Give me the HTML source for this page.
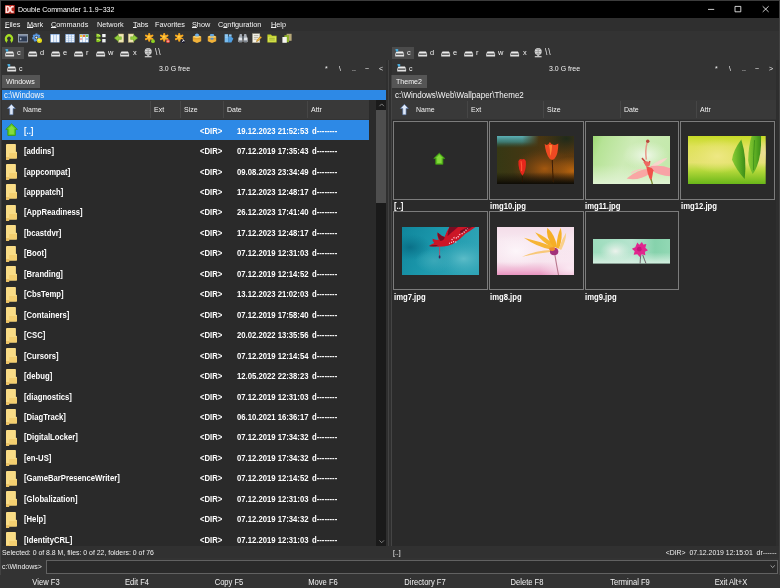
<!DOCTYPE html>
<html><head><meta charset="utf-8"><title>Double Commander</title>
<style>
*{box-sizing:border-box;margin:0;padding:0}
html,body{width:780px;height:588px;overflow:hidden;background:#333333}
body{font-family:"Liberation Sans",sans-serif;font-size:7px;color:#e8e8e8;position:relative}
#app,#app *{position:absolute}
#app u{position:static}
#app{left:0;top:0;width:780px;height:588px;overflow:hidden;background:#333333;will-change:transform}
span{white-space:pre;line-height:1}
svg{overflow:visible}
#title{left:0;top:0;width:780px;height:18px;background:#000}
#title .t{left:18px;top:5.9px;font-size:7.7px;color:#fff;transform:scaleX(.915);transform-origin:0 50%}
#menu{left:0;top:18px;width:780px;height:13px;background:#2f2f2f}
#menu span{top:3.2px;font-size:7.9px;color:#f4f4f4;transform:scaleX(.924);transform-origin:0 50%}
#menu u{text-decoration:underline;text-underline-offset:0px;text-decoration-thickness:0.6px}
#tool{left:0;top:31px;width:780px;height:14px;background:#333333}
#tool svg{top:1.5px;width:10px;height:10.4px}
#drives{left:0;top:45px;width:780px;height:15px;background:#333333}
.drv{top:4.4px;width:9.5px;height:7.5px}
.dl{top:4.4px;font-size:7.8px;color:#f0f0f0;transform:scaleX(.95);transform-origin:0 50%}
.dsel{top:1.6px;height:12.4px;width:22px;background:#4b4b4b}
.pinfo span{font-size:7.6px;color:#f2f2f2;top:64.7px;transform:scaleX(.92);transform-origin:0 50%}
.tab{top:75.4px;height:13px;background:#555;}
.tab span{left:3.7px;top:2.9px;font-size:7.7px;color:#f6f6f6;transform:scaleX(.92);transform-origin:0 50%}
.path{top:89.6px;height:10px}
.path span{left:2.6px;top:1px;font-size:8.5px;color:#f6f6f6;transform:scaleX(.94);transform-origin:0 50%}
.hdr{background:#393939;height:19.4px;top:100px}
.hdr span{top:6px;font-size:7.6px;color:#f2f2f2;transform:scaleX(.92);transform-origin:0 50%}
.hdr i{top:1px;width:1px;height:17.4px;background:#464646}
.sort{top:3.1px;width:8.8px;height:13.1px}
.list{background:#2a2a2a}
.row{left:2px;width:367px;height:20.45px}
.row.sel{background:#2d89e6}
.row span{font-weight:bold;font-size:8.3px;color:#fff;top:7.1px;transform:scaleX(.928);transform-origin:0 50%}
.nm{left:21.7px}.sz{left:198px}.dt{left:235px}.at{left:310px}
.fic{left:4px;width:11px;height:16px}
.upic{left:3.2px;top:3.6px;width:13.2px;height:13.6px}
.cell{width:94.8px;height:79.1px;border:1px solid #7c7c7c;background:#2a2a2a}
.cl{font-weight:bold;font-size:8.3px;color:#fff;transform:scaleX(.928);transform-origin:0 50%;margin-top:-0.3px}
.th{overflow:hidden}
.st span{font-size:7.5px;color:#f0f0f0;top:548.6px;transform:scaleX(.92);transform-origin:0 50%}
#cmd{left:0;top:558px;width:780px;height:17px;background:#333333}
#cmd .lb{left:2px;top:4.7px;font-size:7.6px;color:#f2f2f2;transform:scaleX(.92);transform-origin:0 50%}
#cmd .in{left:46.4px;top:1.8px;width:731.2px;height:14px;border:1px solid #626262;background:#2a2a2a}
#fkeys{left:0;top:575px;width:780px;height:13px;background:#333333}
#fkeys span{top:3.6px;font-size:8.2px;color:#f2f2f2;transform:translateX(-50%) scaleX(.927);transform-origin:50% 50%}
</style></head><body><div id="app">
<div id="title"><span class="t">Double Commander 1.1.9~332</span>
<svg style="left:5.3px;top:4.6px;width:9.8px;height:8.7px" viewBox="0 0 10 9"><rect width="10" height="9" fill="#b8261c"/><path d="M1.3 1.5 H2.8 Q4.5 1.5 4.5 4.5 Q4.5 7.5 2.8 7.5 H1.3Z M8.9 2 Q5.8 0.9 5.8 4.5 Q5.8 8.1 8.9 7" fill="none" stroke="#ffe4e0" stroke-width="1.7"/></svg>
<svg style="left:700px;top:4px;width:80px;height:10px" viewBox="0 0 80 10"><path d="M8 5.4 H14.2 M35 2.4 H40.8 V7.8 H35Z M62.7 2.3 L68.6 7.9 M68.6 2.3 L62.7 7.9" fill="none" stroke="#fff" stroke-width="0.8"/></svg>
</div>
<div id="menu">
<span style="left:5px"><u>F</u>iles</span><span style="left:27px"><u>M</u>ark</span><span style="left:51px"><u>C</u>ommands</span><span style="left:97px">Network</span><span style="left:133px"><u>T</u>abs</span><span style="left:155px">Favorites</span><span style="left:192px"><u>S</u>how</span><span style="left:218px">C<u>o</u>nfiguration</span><span style="left:271px"><u>H</u>elp</span>
</div>
<div id="tool"><svg style="left:3.9px" viewBox="0 0 10 10"><path transform="translate(0.6 0) scale(0.88 1)" d="M2.3 7.6 A3.4 3.4 0 1 1 7.7 7.6" fill="none" stroke="#a6de24" stroke-width="2.4"/><path transform="translate(0.6 0) scale(0.88 1)" d="M0.2 6.4 L3.9 6.6 L2 9.8Z M9.8 6.4 L6.1 6.6 L8 9.8Z" fill="#a6de24"/></svg><svg style="left:18px" viewBox="0 0 10 10"><rect x="0.4" y="1.4" width="9.2" height="7.4" fill="#2f3d55" stroke="#aab4c4" stroke-width="0.8"/><rect x="0.8" y="1.8" width="8.4" height="1.4" fill="#7f8da6"/><path d="M2 4.8 L3.4 5.8 L2 6.8" stroke="#e8eef8" stroke-width="0.7" fill="none"/></svg><svg style="left:32px" viewBox="0 0 10 10"><circle cx="4.4" cy="4.4" r="3" fill="none" stroke="#5b9be6" stroke-width="2.4" stroke-dasharray="1.6 1"/><circle cx="4.4" cy="4.4" r="2.6" fill="none" stroke="#5b9be6" stroke-width="1.4"/><circle cx="4.4" cy="4.4" r="1.1" fill="#e8f0fb"/><circle cx="7.5" cy="7.4" r="2.5" fill="#e6da18"/><circle cx="7" cy="6.8" r="0.9" fill="#f6f07a"/></svg><svg style="left:49.5px" viewBox="0 0 10 10"><rect x="0.3" y="0.8" width="9.4" height="8.6" fill="#7aa2d6"/><rect x="0.9" y="1.5" width="2.5" height="7.4" fill="#f4f8fd"/><rect x="3.8" y="1.5" width="2.5" height="7.4" fill="#e3eefb"/><rect x="6.7" y="1.5" width="2.5" height="7.4" fill="#f4f8fd"/></svg><svg style="left:64.5px" viewBox="0 0 10 10"><rect x="0.3" y="0.8" width="9.4" height="8.6" fill="#7aa2d6"/><rect x="0.9" y="1.5" width="2.5" height="7.4" fill="#f0f5fc"/><rect x="3.8" y="1.5" width="2.5" height="7.4" fill="#e4eefa"/><rect x="6.7" y="1.5" width="2.5" height="7.4" fill="#f0f5fc"/><path d="M0.6 3.4 H9.4 M0.6 5.4 H9.4 M0.6 7.3 H9.4" stroke="#9dbbe0" stroke-width="0.4"/></svg><svg style="left:78.5px" viewBox="0 0 10 10"><rect x="0.3" y="0.8" width="9.4" height="8.6" fill="#7aa2d6"/><rect x="0.9" y="1.5" width="2.5" height="7.4" fill="#f4f8fd"/><rect x="3.8" y="1.5" width="2.5" height="7.4" fill="#f4f8fd"/><rect x="6.7" y="1.5" width="2.5" height="7.4" fill="#f4f8fd"/><rect x="1" y="1.6" width="2.3" height="2.2" fill="#f2c43a"/><rect x="3.9" y="1.6" width="2.3" height="2.2" fill="#e8753a"/><rect x="6.8" y="1.6" width="2.3" height="2.2" fill="#7fc241"/><rect x="1" y="5" width="2.3" height="1.6" fill="#e8a0a0"/><rect x="6.8" y="5" width="2.3" height="1.6" fill="#a0c4e8"/></svg><svg style="left:96px" viewBox="0 0 10 10"><path d="M0.3 0.6 Q4.4 0 5 3 Q2.4 5.2 0.3 3.8Z M0.3 5.2 Q4.2 4.6 5.2 7.4 Q2.6 10 0.3 8.6Z" fill="#86c61e"/><path d="M0.9 1.8 Q2.8 1.2 3.8 2.6 M0.9 6.4 Q2.8 5.8 3.8 7.2" stroke="#dcf08e" stroke-width="0.9" fill="none"/><rect x="6.2" y="0.8" width="3.4" height="3.2" fill="#f4f6f8"/><rect x="6.2" y="5.8" width="3.4" height="3.4" fill="#eceff2"/></svg><svg style="left:113.5px" viewBox="0 0 10 10"><rect x="4.2" y="0.8" width="5.4" height="8.2" fill="#efe6b4" stroke="#c9bd7a" stroke-width="0.5"/><path d="M0.3 4.9 L4.4 1.6 V3.6 H7.4 V6.2 H4.4 V8.2Z" fill="#94ce3c" stroke="#5c9c1c" stroke-width="0.4"/></svg><svg style="left:128px" viewBox="0 0 10 10"><rect x="0.4" y="0.8" width="5.4" height="8.2" fill="#efe6b4" stroke="#c9bd7a" stroke-width="0.5"/><path d="M9.7 4.9 L5.6 1.6 V3.6 H2.6 V6.2 H5.6 V8.2Z" fill="#94ce3c" stroke="#5c9c1c" stroke-width="0.4"/></svg><svg style="left:145px" viewBox="0 0 10 10"><path d="M4.2 0.8 V7.6 M1 2.4 L7.4 6 M7.4 2.4 L1 6" stroke="#f6a620" stroke-width="2.1" stroke-linecap="round" fill="none"/><circle cx="4.2" cy="4.2" r="2.3" fill="#f8b42c"/><circle cx="3.8" cy="3.6" r="1" fill="#fdd34e"/><circle cx="8" cy="8" r="1.9" fill="#8ed022"/></svg><svg style="left:160px" viewBox="0 0 10 10"><path d="M4.2 0.8 V7.6 M1 2.4 L7.4 6 M7.4 2.4 L1 6" stroke="#f6a620" stroke-width="2.1" stroke-linecap="round" fill="none"/><circle cx="4.2" cy="4.2" r="2.3" fill="#f8b42c"/><circle cx="3.8" cy="3.6" r="1" fill="#fdd34e"/><circle cx="8" cy="8" r="1.9" fill="#e8483a"/><path d="M6.9 8 H9.1" stroke="#fff" stroke-width="0.7"/></svg><svg style="left:174.8px" viewBox="0 0 10 10"><path d="M4.2 0.8 V7.6 M1 2.4 L7.4 6 M7.4 2.4 L1 6" stroke="#f6a620" stroke-width="2.1" stroke-linecap="round" fill="none"/><circle cx="4.2" cy="4.2" r="2.3" fill="#f8b42c"/><circle cx="3.8" cy="3.6" r="1" fill="#fdd34e"/><rect x="6" y="6" width="3.8" height="3.8" fill="#1b1b2e"/><path d="M6.8 9 L9 6.8 M9 6.8 H7.4 M9 6.8 V8.4" stroke="#fff" stroke-width="0.7" fill="none"/></svg><svg style="left:192px" viewBox="0 0 10 10"><path d="M0.8 3.4 H9.2 V8 L5 9.8 L0.8 8Z" fill="#f1b23a"/><path d="M0.8 3.4 L5 1.6 L9.2 3.4 L5 5.2Z" fill="#f9d06a"/><path d="M3.2 0.8 H6.8 V3.2 H3.2Z" fill="#5fa3e0"/><path d="M0.8 5.6 H9.2" stroke="#c9871a" stroke-width="0.6"/><circle cx="5" cy="1.6" r="1.3" fill="#6fb0ea"/></svg><svg style="left:207px" viewBox="0 0 10 10"><path d="M0.8 3.4 H9.2 V8 L5 9.8 L0.8 8Z" fill="#f1b23a"/><path d="M0.8 3.4 L5 1.6 L9.2 3.4 L5 5.2Z" fill="#f9d06a"/><path d="M3.2 0.8 H6.8 V3.2 H3.2Z" fill="#5fa3e0"/><path d="M0.8 5.6 H9.2" stroke="#c9871a" stroke-width="0.6"/><path d="M3.6 4.6 H6.4 V6.4 H3.6Z" fill="#4d8fd6"/></svg><svg style="left:224px" viewBox="0 0 10 10"><path d="M0.6 1 H4.2 V9.2 H0.6Z" fill="#79bcee"/><path d="M4.2 3.4 H7 L9.4 5.2 L7.4 9.2 H4.2Z" fill="#4f9fe2"/><path d="M5 1.2 H7.6 V3.4 H5Z" fill="#8cc6f2"/><path d="M1.2 2 H3.6 M1.2 4 H3.6" stroke="#bfe0f8" stroke-width="0.6"/></svg><svg style="left:238px" viewBox="0 0 10 10"><path d="M1 4 L1.8 0.8 H3.8 L4.2 4Z M9 4 L8.2 0.8 H6.2 L5.8 4Z" fill="#a4aab2"/><rect x="0.4" y="4" width="4" height="5" rx="0.8" fill="#dde1e6"/><rect x="5.6" y="4" width="4" height="5" rx="0.8" fill="#dde1e6"/><rect x="4" y="3" width="2" height="2.4" fill="#5c646e"/><rect x="0.8" y="7.2" width="3.2" height="1.6" fill="#7c848e"/><rect x="6" y="7.2" width="3.2" height="1.6" fill="#7c848e"/></svg><svg style="left:252px" viewBox="0 0 10 10"><rect x="0.6" y="0.6" width="7.2" height="8.8" fill="#f6f4ea" stroke="#b8b49c" stroke-width="0.5"/><path d="M1.8 2.4 H6.4 M1.8 4.2 H6.4 M1.8 6 H4.6" stroke="#8c8a78" stroke-width="0.6"/><path d="M4.4 8.6 L5 6.6 L8.6 3 L9.8 4.2 L6.2 7.8Z" fill="#f2b632" stroke="#8a5c10" stroke-width="0.4"/></svg><svg style="left:267px" viewBox="0 0 10 10"><path d="M0.4 1.4 H4 L5 2.6 H9.6 V9.2 H0.4Z" fill="#c2d22c"/><rect x="1.2" y="3.6" width="7.6" height="4.8" fill="#dde85a"/><path d="M2.2 5 H7.8 M2.2 6.8 H7.8" stroke="#7f9410" stroke-width="0.7"/></svg><svg style="left:282px" viewBox="0 0 10 10"><rect x="4.6" y="0.6" width="5" height="7" fill="#b7a878"/><rect x="2.4" y="2" width="4.6" height="7" fill="#8db02a"/><rect x="0.4" y="3.8" width="4.4" height="5.8" fill="#f6f6f2"/></svg></div>
<div id="drives"><div class="dsel" style="left:2px"></div><svg class="drv" style="left:4.5px" viewBox="0 0 9.5 7.5"><path d="M1.5 2.5 H7.9 L9.1 4.5 H0.2Z" fill="#ececec"/><rect x="0.2" y="4.4" width="8.9" height="3" rx="0.5" fill="#e2e2e2"/><rect x="0.9" y="4.7" width="7.5" height="1.1" fill="#4c4c4c"/><path d="M0.5 0 L3.2 0.3 V2.5 H1Z" fill="#35a4dc"/><path d="M0.4 0.9 H3.3" stroke="#9fdcf6" stroke-width="0.35"/></svg><span class="dl" style="left:17px">c</span><svg class="drv" style="left:27.8px" viewBox="0 0 9.5 7.5"><path d="M1.5 2.5 H7.9 L9.1 4.5 H0.2Z" fill="#ececec"/><rect x="0.2" y="4.4" width="8.9" height="3" rx="0.5" fill="#e2e2e2"/><rect x="0.9" y="4.7" width="7.5" height="1.1" fill="#4c4c4c"/></svg><span class="dl" style="left:40px">d</span><svg class="drv" style="left:50.8px" viewBox="0 0 9.5 7.5"><path d="M1.5 2.5 H7.9 L9.1 4.5 H0.2Z" fill="#ececec"/><rect x="0.2" y="4.4" width="8.9" height="3" rx="0.5" fill="#e2e2e2"/><rect x="0.9" y="4.7" width="7.5" height="1.1" fill="#4c4c4c"/></svg><span class="dl" style="left:63px">e</span><svg class="drv" style="left:73.6px" viewBox="0 0 9.5 7.5"><path d="M1.5 2.5 H7.9 L9.1 4.5 H0.2Z" fill="#ececec"/><rect x="0.2" y="4.4" width="8.9" height="3" rx="0.5" fill="#e2e2e2"/><rect x="0.9" y="4.7" width="7.5" height="1.1" fill="#4c4c4c"/></svg><span class="dl" style="left:86px">r</span><svg class="drv" style="left:95.8px" viewBox="0 0 9.5 7.5"><path d="M1.5 2.5 H7.9 L9.1 4.5 H0.2Z" fill="#ececec"/><rect x="0.2" y="4.4" width="8.9" height="3" rx="0.5" fill="#e2e2e2"/><rect x="0.9" y="4.7" width="7.5" height="1.1" fill="#4c4c4c"/></svg><span class="dl" style="left:108px">w</span><svg class="drv" style="left:120.4px" viewBox="0 0 9.5 7.5"><path d="M1.5 2.5 H7.9 L9.1 4.5 H0.2Z" fill="#ececec"/><rect x="0.2" y="4.4" width="8.9" height="3" rx="0.5" fill="#e2e2e2"/><rect x="0.9" y="4.7" width="7.5" height="1.1" fill="#4c4c4c"/></svg><span class="dl" style="left:132.5px">x</span><svg style="left:144px;top:3.2px;width:8.5px;height:9.5px" viewBox="0 0 8.5 9.5"><circle cx="4.2" cy="3.6" r="3.5" fill="#d9d9d9"/><path d="M0.8 3.6 H7.6 M4.2 0.2 V7 M1.8 1.2 Q4.2 2.6 6.6 1.2 M1.8 6 Q4.2 4.6 6.6 6" stroke="#7a7a7a" stroke-width="0.5" fill="none"/><rect x="3.2" y="7" width="2" height="1.2" fill="#bdbdbd"/><rect x="0.8" y="8.1" width="6.8" height="1.2" fill="#cfcfcf"/></svg><span class="dl" style="left:154.6px;top:3.4px;font-size:8.8px;letter-spacing:1px">\\</span><div class="dsel" style="left:392px"></div><svg class="drv" style="left:394.5px" viewBox="0 0 9.5 7.5"><path d="M1.5 2.5 H7.9 L9.1 4.5 H0.2Z" fill="#ececec"/><rect x="0.2" y="4.4" width="8.9" height="3" rx="0.5" fill="#e2e2e2"/><rect x="0.9" y="4.7" width="7.5" height="1.1" fill="#4c4c4c"/><path d="M0.5 0 L3.2 0.3 V2.5 H1Z" fill="#35a4dc"/><path d="M0.4 0.9 H3.3" stroke="#9fdcf6" stroke-width="0.35"/></svg><span class="dl" style="left:407px">c</span><svg class="drv" style="left:417.8px" viewBox="0 0 9.5 7.5"><path d="M1.5 2.5 H7.9 L9.1 4.5 H0.2Z" fill="#ececec"/><rect x="0.2" y="4.4" width="8.9" height="3" rx="0.5" fill="#e2e2e2"/><rect x="0.9" y="4.7" width="7.5" height="1.1" fill="#4c4c4c"/></svg><span class="dl" style="left:430px">d</span><svg class="drv" style="left:440.8px" viewBox="0 0 9.5 7.5"><path d="M1.5 2.5 H7.9 L9.1 4.5 H0.2Z" fill="#ececec"/><rect x="0.2" y="4.4" width="8.9" height="3" rx="0.5" fill="#e2e2e2"/><rect x="0.9" y="4.7" width="7.5" height="1.1" fill="#4c4c4c"/></svg><span class="dl" style="left:453px">e</span><svg class="drv" style="left:463.6px" viewBox="0 0 9.5 7.5"><path d="M1.5 2.5 H7.9 L9.1 4.5 H0.2Z" fill="#ececec"/><rect x="0.2" y="4.4" width="8.9" height="3" rx="0.5" fill="#e2e2e2"/><rect x="0.9" y="4.7" width="7.5" height="1.1" fill="#4c4c4c"/></svg><span class="dl" style="left:476px">r</span><svg class="drv" style="left:485.8px" viewBox="0 0 9.5 7.5"><path d="M1.5 2.5 H7.9 L9.1 4.5 H0.2Z" fill="#ececec"/><rect x="0.2" y="4.4" width="8.9" height="3" rx="0.5" fill="#e2e2e2"/><rect x="0.9" y="4.7" width="7.5" height="1.1" fill="#4c4c4c"/></svg><span class="dl" style="left:498px">w</span><svg class="drv" style="left:510.4px" viewBox="0 0 9.5 7.5"><path d="M1.5 2.5 H7.9 L9.1 4.5 H0.2Z" fill="#ececec"/><rect x="0.2" y="4.4" width="8.9" height="3" rx="0.5" fill="#e2e2e2"/><rect x="0.9" y="4.7" width="7.5" height="1.1" fill="#4c4c4c"/></svg><span class="dl" style="left:522.5px">x</span><svg style="left:534px;top:3.2px;width:8.5px;height:9.5px" viewBox="0 0 8.5 9.5"><circle cx="4.2" cy="3.6" r="3.5" fill="#d9d9d9"/><path d="M0.8 3.6 H7.6 M4.2 0.2 V7 M1.8 1.2 Q4.2 2.6 6.6 1.2 M1.8 6 Q4.2 4.6 6.6 6" stroke="#7a7a7a" stroke-width="0.5" fill="none"/><rect x="3.2" y="7" width="2" height="1.2" fill="#bdbdbd"/><rect x="0.8" y="8.1" width="6.8" height="1.2" fill="#cfcfcf"/></svg><span class="dl" style="left:544.6px;top:3.4px;font-size:8.8px;letter-spacing:1px">\\</span></div>

<!-- LEFT PANEL -->
<div class="pinfo" style="left:0;top:0;width:388px;height:75px">
<svg class="drv" style="left:6.6px;top:63.9px" viewBox="0 0 9.5 7.5"><path d="M1.5 2.5 H7.9 L9.1 4.5 H0.2Z" fill="#ececec"/><rect x="0.2" y="4.4" width="8.9" height="3" rx="0.5" fill="#e2e2e2"/><rect x="0.9" y="4.7" width="7.5" height="1.1" fill="#4c4c4c"/><path d="M0.5 0 L3.2 0.3 V2.5 H1Z" fill="#35a4dc"/><path d="M0.4 0.9 H3.3" stroke="#9fdcf6" stroke-width="0.35"/></svg><span style="left:19px">c</span><span style="left:159px">3.0 G free</span>
<span style="left:325px">*</span><span style="left:339px">\</span><span style="left:352px">..</span><span style="left:365px">~</span><span style="left:379.4px">&lt;</span>
</div>
<div class="tab" style="left:2px;width:38px"><span>Windows</span></div>
<div class="path" style="left:2px;width:384.5px;background:#2d89e6"><span style="left:1.6px;transform:scaleX(.925)">c:\Windows</span></div>
<div class="hdr" style="left:2px;width:367px">
<svg class="sort" style="left:5px" viewBox="0 0 11 14"><path d="M5.5 0.5 L10.5 5.6 H7.6 V13.5 H3.4 V5.6 H0.5Z" fill="#dfe9f8" stroke="#4a6da8" stroke-width="0.7"/></svg>
<span style="left:21px">Name</span><i style="left:148px"></i><span style="left:152px">Ext</span><i style="left:178px"></i><span style="left:182px">Size</span><i style="left:221px"></i><span style="left:225px">Date</span><i style="left:305px"></i><span style="left:309px">Attr</span>
</div>
<div class="list" style="left:2px;top:119.6px;width:374px;height:426.8px"></div>
<div id="lrows" style="left:0;top:0;width:388px;height:546.4px;overflow:hidden">
<div class="row sel" style="top:119.60px">
<svg class="upic" viewBox="0 0 14 14"><path d="M7 0.6 L13.2 6.6 H11 V13 H3 V6.6 H0.8Z" fill="#62cc22" stroke="#3f9a14" stroke-width="0.9"/><path d="M7 2.6 L10.4 6 H9.4 V11.6 H4.6 V6 H3.6Z" fill="#86dc3e"/></svg>
<span class="nm">[..]</span><span class="sz">&lt;DIR&gt;</span><span class="dt">19.12.2023 21:52:53</span><span class="at">d--------</span></div>
<div class="row" style="top:140.05px">
<svg class="fic" viewBox="0 0 11 16" style="top:3.5px"><path d="M0.9 0 H9.2 Q9.9 0 9.9 0.7 V7.8 H10.3 Q11 7.8 11 8.5 V13.8 Q11 14.5 10.3 14.5 H3.2 V15.3 Q3.2 16 2.5 16 H0.7 Q0 16 0 15.3 V0.9 Q0 0 0.9 0Z" fill="#f9dc86"/><path d="M3.2 9 H11 V13.8 Q11 14.5 10.3 14.5 H3.2Z" fill="#f4cf70"/><path d="M0 13 H3.2 V15.3 Q3.2 16 2.5 16 H0.7 Q0 16 0 15.3Z" fill="#ecc264"/></svg>
<span class="nm">[addins]</span><span class="sz">&lt;DIR&gt;</span><span class="dt">07.12.2019 17:35:43</span><span class="at">d--------</span></div>
<div class="row" style="top:160.50px">
<svg class="fic" viewBox="0 0 11 16" style="top:3.5px"><path d="M0.9 0 H9.2 Q9.9 0 9.9 0.7 V7.8 H10.3 Q11 7.8 11 8.5 V13.8 Q11 14.5 10.3 14.5 H3.2 V15.3 Q3.2 16 2.5 16 H0.7 Q0 16 0 15.3 V0.9 Q0 0 0.9 0Z" fill="#f9dc86"/><path d="M3.2 9 H11 V13.8 Q11 14.5 10.3 14.5 H3.2Z" fill="#f4cf70"/><path d="M0 13 H3.2 V15.3 Q3.2 16 2.5 16 H0.7 Q0 16 0 15.3Z" fill="#ecc264"/></svg>
<span class="nm">[appcompat]</span><span class="sz">&lt;DIR&gt;</span><span class="dt">09.08.2023 23:34:49</span><span class="at">d--------</span></div>
<div class="row" style="top:180.95px">
<svg class="fic" viewBox="0 0 11 16" style="top:3.5px"><path d="M0.9 0 H9.2 Q9.9 0 9.9 0.7 V7.8 H10.3 Q11 7.8 11 8.5 V13.8 Q11 14.5 10.3 14.5 H3.2 V15.3 Q3.2 16 2.5 16 H0.7 Q0 16 0 15.3 V0.9 Q0 0 0.9 0Z" fill="#f9dc86"/><path d="M3.2 9 H11 V13.8 Q11 14.5 10.3 14.5 H3.2Z" fill="#f4cf70"/><path d="M0 13 H3.2 V15.3 Q3.2 16 2.5 16 H0.7 Q0 16 0 15.3Z" fill="#ecc264"/></svg>
<span class="nm">[apppatch]</span><span class="sz">&lt;DIR&gt;</span><span class="dt">17.12.2023 12:48:17</span><span class="at">d--------</span></div>
<div class="row" style="top:201.40px">
<svg class="fic" viewBox="0 0 11 16" style="top:3.5px"><path d="M0.9 0 H9.2 Q9.9 0 9.9 0.7 V7.8 H10.3 Q11 7.8 11 8.5 V13.8 Q11 14.5 10.3 14.5 H3.2 V15.3 Q3.2 16 2.5 16 H0.7 Q0 16 0 15.3 V0.9 Q0 0 0.9 0Z" fill="#f9dc86"/><path d="M3.2 9 H11 V13.8 Q11 14.5 10.3 14.5 H3.2Z" fill="#f4cf70"/><path d="M0 13 H3.2 V15.3 Q3.2 16 2.5 16 H0.7 Q0 16 0 15.3Z" fill="#ecc264"/></svg>
<span class="nm">[AppReadiness]</span><span class="sz">&lt;DIR&gt;</span><span class="dt">26.12.2023 17:41:40</span><span class="at">d--------</span></div>
<div class="row" style="top:221.85px">
<svg class="fic" viewBox="0 0 11 16" style="top:3.5px"><path d="M0.9 0 H9.2 Q9.9 0 9.9 0.7 V7.8 H10.3 Q11 7.8 11 8.5 V13.8 Q11 14.5 10.3 14.5 H3.2 V15.3 Q3.2 16 2.5 16 H0.7 Q0 16 0 15.3 V0.9 Q0 0 0.9 0Z" fill="#f9dc86"/><path d="M3.2 9 H11 V13.8 Q11 14.5 10.3 14.5 H3.2Z" fill="#f4cf70"/><path d="M0 13 H3.2 V15.3 Q3.2 16 2.5 16 H0.7 Q0 16 0 15.3Z" fill="#ecc264"/></svg>
<span class="nm">[bcastdvr]</span><span class="sz">&lt;DIR&gt;</span><span class="dt">17.12.2023 12:48:17</span><span class="at">d--------</span></div>
<div class="row" style="top:242.30px">
<svg class="fic" viewBox="0 0 11 16" style="top:3.5px"><path d="M0.9 0 H9.2 Q9.9 0 9.9 0.7 V7.8 H10.3 Q11 7.8 11 8.5 V13.8 Q11 14.5 10.3 14.5 H3.2 V15.3 Q3.2 16 2.5 16 H0.7 Q0 16 0 15.3 V0.9 Q0 0 0.9 0Z" fill="#f9dc86"/><path d="M3.2 9 H11 V13.8 Q11 14.5 10.3 14.5 H3.2Z" fill="#f4cf70"/><path d="M0 13 H3.2 V15.3 Q3.2 16 2.5 16 H0.7 Q0 16 0 15.3Z" fill="#ecc264"/></svg>
<span class="nm">[Boot]</span><span class="sz">&lt;DIR&gt;</span><span class="dt">07.12.2019 12:31:03</span><span class="at">d--------</span></div>
<div class="row" style="top:262.75px">
<svg class="fic" viewBox="0 0 11 16" style="top:3.5px"><path d="M0.9 0 H9.2 Q9.9 0 9.9 0.7 V7.8 H10.3 Q11 7.8 11 8.5 V13.8 Q11 14.5 10.3 14.5 H3.2 V15.3 Q3.2 16 2.5 16 H0.7 Q0 16 0 15.3 V0.9 Q0 0 0.9 0Z" fill="#f9dc86"/><path d="M3.2 9 H11 V13.8 Q11 14.5 10.3 14.5 H3.2Z" fill="#f4cf70"/><path d="M0 13 H3.2 V15.3 Q3.2 16 2.5 16 H0.7 Q0 16 0 15.3Z" fill="#ecc264"/></svg>
<span class="nm">[Branding]</span><span class="sz">&lt;DIR&gt;</span><span class="dt">07.12.2019 12:14:52</span><span class="at">d--------</span></div>
<div class="row" style="top:283.20px">
<svg class="fic" viewBox="0 0 11 16" style="top:3.5px"><path d="M0.9 0 H9.2 Q9.9 0 9.9 0.7 V7.8 H10.3 Q11 7.8 11 8.5 V13.8 Q11 14.5 10.3 14.5 H3.2 V15.3 Q3.2 16 2.5 16 H0.7 Q0 16 0 15.3 V0.9 Q0 0 0.9 0Z" fill="#f9dc86"/><path d="M3.2 9 H11 V13.8 Q11 14.5 10.3 14.5 H3.2Z" fill="#f4cf70"/><path d="M0 13 H3.2 V15.3 Q3.2 16 2.5 16 H0.7 Q0 16 0 15.3Z" fill="#ecc264"/></svg>
<span class="nm">[CbsTemp]</span><span class="sz">&lt;DIR&gt;</span><span class="dt">13.12.2023 21:02:03</span><span class="at">d--------</span></div>
<div class="row" style="top:303.65px">
<svg class="fic" viewBox="0 0 11 16" style="top:3.5px"><path d="M0.9 0 H9.2 Q9.9 0 9.9 0.7 V7.8 H10.3 Q11 7.8 11 8.5 V13.8 Q11 14.5 10.3 14.5 H3.2 V15.3 Q3.2 16 2.5 16 H0.7 Q0 16 0 15.3 V0.9 Q0 0 0.9 0Z" fill="#f9dc86"/><path d="M3.2 9 H11 V13.8 Q11 14.5 10.3 14.5 H3.2Z" fill="#f4cf70"/><path d="M0 13 H3.2 V15.3 Q3.2 16 2.5 16 H0.7 Q0 16 0 15.3Z" fill="#ecc264"/></svg>
<span class="nm">[Containers]</span><span class="sz">&lt;DIR&gt;</span><span class="dt">07.12.2019 17:58:40</span><span class="at">d--------</span></div>
<div class="row" style="top:324.10px">
<svg class="fic" viewBox="0 0 11 16" style="top:3.5px"><path d="M0.9 0 H9.2 Q9.9 0 9.9 0.7 V7.8 H10.3 Q11 7.8 11 8.5 V13.8 Q11 14.5 10.3 14.5 H3.2 V15.3 Q3.2 16 2.5 16 H0.7 Q0 16 0 15.3 V0.9 Q0 0 0.9 0Z" fill="#f9dc86"/><path d="M3.2 9 H11 V13.8 Q11 14.5 10.3 14.5 H3.2Z" fill="#f4cf70"/><path d="M0 13 H3.2 V15.3 Q3.2 16 2.5 16 H0.7 Q0 16 0 15.3Z" fill="#ecc264"/></svg>
<span class="nm">[CSC]</span><span class="sz">&lt;DIR&gt;</span><span class="dt">20.02.2022 13:35:56</span><span class="at">d--------</span></div>
<div class="row" style="top:344.55px">
<svg class="fic" viewBox="0 0 11 16" style="top:3.5px"><path d="M0.9 0 H9.2 Q9.9 0 9.9 0.7 V7.8 H10.3 Q11 7.8 11 8.5 V13.8 Q11 14.5 10.3 14.5 H3.2 V15.3 Q3.2 16 2.5 16 H0.7 Q0 16 0 15.3 V0.9 Q0 0 0.9 0Z" fill="#f9dc86"/><path d="M3.2 9 H11 V13.8 Q11 14.5 10.3 14.5 H3.2Z" fill="#f4cf70"/><path d="M0 13 H3.2 V15.3 Q3.2 16 2.5 16 H0.7 Q0 16 0 15.3Z" fill="#ecc264"/></svg>
<span class="nm">[Cursors]</span><span class="sz">&lt;DIR&gt;</span><span class="dt">07.12.2019 12:14:54</span><span class="at">d--------</span></div>
<div class="row" style="top:365.00px">
<svg class="fic" viewBox="0 0 11 16" style="top:3.5px"><path d="M0.9 0 H9.2 Q9.9 0 9.9 0.7 V7.8 H10.3 Q11 7.8 11 8.5 V13.8 Q11 14.5 10.3 14.5 H3.2 V15.3 Q3.2 16 2.5 16 H0.7 Q0 16 0 15.3 V0.9 Q0 0 0.9 0Z" fill="#f9dc86"/><path d="M3.2 9 H11 V13.8 Q11 14.5 10.3 14.5 H3.2Z" fill="#f4cf70"/><path d="M0 13 H3.2 V15.3 Q3.2 16 2.5 16 H0.7 Q0 16 0 15.3Z" fill="#ecc264"/></svg>
<span class="nm">[debug]</span><span class="sz">&lt;DIR&gt;</span><span class="dt">12.05.2022 22:38:23</span><span class="at">d--------</span></div>
<div class="row" style="top:385.45px">
<svg class="fic" viewBox="0 0 11 16" style="top:3.5px"><path d="M0.9 0 H9.2 Q9.9 0 9.9 0.7 V7.8 H10.3 Q11 7.8 11 8.5 V13.8 Q11 14.5 10.3 14.5 H3.2 V15.3 Q3.2 16 2.5 16 H0.7 Q0 16 0 15.3 V0.9 Q0 0 0.9 0Z" fill="#f9dc86"/><path d="M3.2 9 H11 V13.8 Q11 14.5 10.3 14.5 H3.2Z" fill="#f4cf70"/><path d="M0 13 H3.2 V15.3 Q3.2 16 2.5 16 H0.7 Q0 16 0 15.3Z" fill="#ecc264"/></svg>
<span class="nm">[diagnostics]</span><span class="sz">&lt;DIR&gt;</span><span class="dt">07.12.2019 12:31:03</span><span class="at">d--------</span></div>
<div class="row" style="top:405.90px">
<svg class="fic" viewBox="0 0 11 16" style="top:3.5px"><path d="M0.9 0 H9.2 Q9.9 0 9.9 0.7 V7.8 H10.3 Q11 7.8 11 8.5 V13.8 Q11 14.5 10.3 14.5 H3.2 V15.3 Q3.2 16 2.5 16 H0.7 Q0 16 0 15.3 V0.9 Q0 0 0.9 0Z" fill="#f9dc86"/><path d="M3.2 9 H11 V13.8 Q11 14.5 10.3 14.5 H3.2Z" fill="#f4cf70"/><path d="M0 13 H3.2 V15.3 Q3.2 16 2.5 16 H0.7 Q0 16 0 15.3Z" fill="#ecc264"/></svg>
<span class="nm">[DiagTrack]</span><span class="sz">&lt;DIR&gt;</span><span class="dt">06.10.2021 16:36:17</span><span class="at">d--------</span></div>
<div class="row" style="top:426.35px">
<svg class="fic" viewBox="0 0 11 16" style="top:3.5px"><path d="M0.9 0 H9.2 Q9.9 0 9.9 0.7 V7.8 H10.3 Q11 7.8 11 8.5 V13.8 Q11 14.5 10.3 14.5 H3.2 V15.3 Q3.2 16 2.5 16 H0.7 Q0 16 0 15.3 V0.9 Q0 0 0.9 0Z" fill="#f9dc86"/><path d="M3.2 9 H11 V13.8 Q11 14.5 10.3 14.5 H3.2Z" fill="#f4cf70"/><path d="M0 13 H3.2 V15.3 Q3.2 16 2.5 16 H0.7 Q0 16 0 15.3Z" fill="#ecc264"/></svg>
<span class="nm">[DigitalLocker]</span><span class="sz">&lt;DIR&gt;</span><span class="dt">07.12.2019 17:34:32</span><span class="at">d--------</span></div>
<div class="row" style="top:446.80px">
<svg class="fic" viewBox="0 0 11 16" style="top:3.5px"><path d="M0.9 0 H9.2 Q9.9 0 9.9 0.7 V7.8 H10.3 Q11 7.8 11 8.5 V13.8 Q11 14.5 10.3 14.5 H3.2 V15.3 Q3.2 16 2.5 16 H0.7 Q0 16 0 15.3 V0.9 Q0 0 0.9 0Z" fill="#f9dc86"/><path d="M3.2 9 H11 V13.8 Q11 14.5 10.3 14.5 H3.2Z" fill="#f4cf70"/><path d="M0 13 H3.2 V15.3 Q3.2 16 2.5 16 H0.7 Q0 16 0 15.3Z" fill="#ecc264"/></svg>
<span class="nm">[en-US]</span><span class="sz">&lt;DIR&gt;</span><span class="dt">07.12.2019 17:34:32</span><span class="at">d--------</span></div>
<div class="row" style="top:467.25px">
<svg class="fic" viewBox="0 0 11 16" style="top:3.5px"><path d="M0.9 0 H9.2 Q9.9 0 9.9 0.7 V7.8 H10.3 Q11 7.8 11 8.5 V13.8 Q11 14.5 10.3 14.5 H3.2 V15.3 Q3.2 16 2.5 16 H0.7 Q0 16 0 15.3 V0.9 Q0 0 0.9 0Z" fill="#f9dc86"/><path d="M3.2 9 H11 V13.8 Q11 14.5 10.3 14.5 H3.2Z" fill="#f4cf70"/><path d="M0 13 H3.2 V15.3 Q3.2 16 2.5 16 H0.7 Q0 16 0 15.3Z" fill="#ecc264"/></svg>
<span class="nm">[GameBarPresenceWriter]</span><span class="sz">&lt;DIR&gt;</span><span class="dt">07.12.2019 12:14:52</span><span class="at">d--------</span></div>
<div class="row" style="top:487.70px">
<svg class="fic" viewBox="0 0 11 16" style="top:3.5px"><path d="M0.9 0 H9.2 Q9.9 0 9.9 0.7 V7.8 H10.3 Q11 7.8 11 8.5 V13.8 Q11 14.5 10.3 14.5 H3.2 V15.3 Q3.2 16 2.5 16 H0.7 Q0 16 0 15.3 V0.9 Q0 0 0.9 0Z" fill="#f9dc86"/><path d="M3.2 9 H11 V13.8 Q11 14.5 10.3 14.5 H3.2Z" fill="#f4cf70"/><path d="M0 13 H3.2 V15.3 Q3.2 16 2.5 16 H0.7 Q0 16 0 15.3Z" fill="#ecc264"/></svg>
<span class="nm">[Globalization]</span><span class="sz">&lt;DIR&gt;</span><span class="dt">07.12.2019 12:31:03</span><span class="at">d--------</span></div>
<div class="row" style="top:508.15px">
<svg class="fic" viewBox="0 0 11 16" style="top:3.5px"><path d="M0.9 0 H9.2 Q9.9 0 9.9 0.7 V7.8 H10.3 Q11 7.8 11 8.5 V13.8 Q11 14.5 10.3 14.5 H3.2 V15.3 Q3.2 16 2.5 16 H0.7 Q0 16 0 15.3 V0.9 Q0 0 0.9 0Z" fill="#f9dc86"/><path d="M3.2 9 H11 V13.8 Q11 14.5 10.3 14.5 H3.2Z" fill="#f4cf70"/><path d="M0 13 H3.2 V15.3 Q3.2 16 2.5 16 H0.7 Q0 16 0 15.3Z" fill="#ecc264"/></svg>
<span class="nm">[Help]</span><span class="sz">&lt;DIR&gt;</span><span class="dt">07.12.2019 17:34:32</span><span class="at">d--------</span></div>
<div class="row" style="top:528.60px">
<svg class="fic" viewBox="0 0 11 16" style="top:3.5px"><path d="M0.9 0 H9.2 Q9.9 0 9.9 0.7 V7.8 H10.3 Q11 7.8 11 8.5 V13.8 Q11 14.5 10.3 14.5 H3.2 V15.3 Q3.2 16 2.5 16 H0.7 Q0 16 0 15.3 V0.9 Q0 0 0.9 0Z" fill="#f9dc86"/><path d="M3.2 9 H11 V13.8 Q11 14.5 10.3 14.5 H3.2Z" fill="#f4cf70"/><path d="M0 13 H3.2 V15.3 Q3.2 16 2.5 16 H0.7 Q0 16 0 15.3Z" fill="#ecc264"/></svg>
<span class="nm">[IdentityCRL]</span><span class="sz">&lt;DIR&gt;</span><span class="dt">07.12.2019 12:31:03</span><span class="at">d--------</span></div>
</div>
<!-- scrollbar -->
<div style="left:376.2px;top:100px;width:9.6px;height:446.4px;background:#1a1a1a"></div>
<div style="left:376.2px;top:110px;width:9.6px;height:93px;background:#4e4e4e"></div>
<svg style="left:378.6px;top:103.4px;width:5.4px;height:3.6px" viewBox="0 0 6 4"><path d="M0.5 3.5 L3 1 L5.5 3.5" fill="none" stroke="#9a9a9a" stroke-width="0.9"/></svg>
<svg style="left:378.6px;top:540px;width:5.4px;height:3.6px" viewBox="0 0 6 4"><path d="M0.5 0.5 L3 3 L5.5 0.5" fill="none" stroke="#9a9a9a" stroke-width="0.9"/></svg>
<div style="left:369px;top:100px;width:7px;height:19.6px;background:#2a2a2a"></div>
<!-- splitter -->
<div style="left:385.8px;top:60px;width:6.2px;height:498px;background:#2f2f2f"></div><div style="left:387.8px;top:60px;width:1.1px;height:498px;background:#424242"></div><div style="left:391px;top:75px;width:1px;height:472px;background:#444"></div>

<!-- RIGHT PANEL -->
<div class="pinfo" style="left:390px;top:0;width:390px;height:75px">
<svg class="drv" style="left:6.6px;top:63.9px" viewBox="0 0 9.5 7.5"><path d="M1.5 2.5 H7.9 L9.1 4.5 H0.2Z" fill="#ececec"/><rect x="0.2" y="4.4" width="8.9" height="3" rx="0.5" fill="#e2e2e2"/><rect x="0.9" y="4.7" width="7.5" height="1.1" fill="#4c4c4c"/><path d="M0.5 0 L3.2 0.3 V2.5 H1Z" fill="#35a4dc"/><path d="M0.4 0.9 H3.3" stroke="#9fdcf6" stroke-width="0.35"/></svg><span style="left:19px">c</span><span style="left:159px">3.0 G free</span>
<span style="left:325px">*</span><span style="left:339px">\</span><span style="left:352px">..</span><span style="left:365px">~</span><span style="left:379.4px">&gt;</span>
</div>
<div class="tab" style="left:392px;width:35px"><span>Theme2</span></div>
<div class="path" style="left:392px;width:384.4px;background:#363636"><span>c:\Windows\Web\Wallpaper\Theme2</span></div>
<div class="hdr" style="left:392px;width:384.4px">
<svg class="sort" style="left:8px" viewBox="0 0 11 14"><path d="M5.5 0.5 L10.5 5.6 H7.6 V13.5 H3.4 V5.6 H0.5Z" fill="#dfe9f8" stroke="#4a6da8" stroke-width="0.7"/></svg>
<span style="left:24px">Name</span><i style="left:75px"></i><span style="left:79px">Ext</span><i style="left:151px"></i><span style="left:155px">Size</span><i style="left:228px"></i><span style="left:232px">Date</span><i style="left:304px"></i><span style="left:308px">Attr</span>
</div>
<div class="list" style="left:392px;top:119.6px;width:384.4px;height:426.8px"></div>
<div class="cell" style="left:393.15px;top:120.95px"></div><svg style="left:433.4px;top:152.3px;width:12.6px;height:13.8px" viewBox="0 0 14 14"><path d="M7 0.6 L13.2 6.6 H11 V13 H3 V6.6 H0.8Z" fill="#62c422" stroke="#3f9414" stroke-width="0.9"/><path d="M7 2.6 L10.4 6 H9.4 V11.6 H4.6 V6 H3.6Z" fill="#84d83c"/></svg><span class="cl" style="left:393.95px;top:202.35px">[..]</span><div class="cell" style="left:488.85px;top:120.95px"></div><svg class="th" style="left:496.7px;top:135.9px;width:77.1px;height:48.2px" viewBox="0 0 77 48" preserveAspectRatio="none"><defs>
<linearGradient id="a10" x1="0" y1="0" x2="1" y2="0"><stop offset="0" stop-color="#363814"/><stop offset="0.45" stop-color="#463612"/><stop offset="1" stop-color="#5e3a0e"/></linearGradient>
<radialGradient id="b10" cx="0.62" cy="0.68" r="0.42"><stop offset="0" stop-color="#a4580f"/><stop offset="0.6" stop-color="#7c4410" stop-opacity="0.55"/><stop offset="1" stop-color="#6a3c10" stop-opacity="0"/></radialGradient>
<radialGradient id="c10" cx="0.98" cy="0.72" r="0.3"><stop offset="0" stop-color="#b8640f"/><stop offset="1" stop-color="#b8640f" stop-opacity="0"/></radialGradient>
<linearGradient id="d10" x1="0" y1="0" x2="0" y2="1"><stop offset="0" stop-color="#5cb0b6"/><stop offset="0.5" stop-color="#3f8a88" stop-opacity="0.8"/><stop offset="1" stop-color="#2f5a48" stop-opacity="0"/></linearGradient>
<linearGradient id="m10" x1="0" y1="0" x2="1" y2="0"><stop offset="0" stop-color="#fff"/><stop offset="0.6" stop-color="#fff"/><stop offset="1" stop-color="#000"/></linearGradient><mask id="k10"><rect width="42" height="12" fill="url(#m10)"/></mask>
<linearGradient id="e10" x1="0" y1="0" x2="0" y2="1"><stop offset="0" stop-color="#120e06" stop-opacity="0"/><stop offset="0.7" stop-color="#120e06" stop-opacity="0.75"/><stop offset="1" stop-color="#0c0a05"/></linearGradient>
<radialGradient id="f10" cx="0.9" cy="0.05" r="0.35"><stop offset="0" stop-color="#1f2a1a"/><stop offset="1" stop-color="#1f2a1a" stop-opacity="0"/></radialGradient>
<filter id="z10"><feGaussianBlur stdDeviation="0.7"/></filter></defs>
<rect width="77" height="48" fill="url(#a10)"/><rect width="77" height="48" fill="url(#b10)"/><rect width="77" height="48" fill="url(#c10)"/><rect width="77" height="48" fill="url(#f10)"/>
<rect width="42" height="12" fill="url(#d10)" mask="url(#k10)"/>
<rect y="36" width="77" height="12" fill="url(#e10)"/>
<g filter="url(#z10)"><path d="M55.2 24 Q55.6 35 56.2 46" stroke="#3a1c08" stroke-width="1" fill="none"/><path d="M25.2 38 V46" stroke="#2a1808" stroke-width="0.9" fill="none"/>
<path d="M47.6 7.6 Q50.6 11 52.8 6 Q55.4 11 61.2 7.4 Q61.4 18 57.4 22.6 Q54.8 25 52.4 22.4 Q48.4 17 47.6 7.6Z" fill="#ee4a20"/><path d="M52 9 Q53.2 14 53 20 Q55 16 55 9Z" fill="#ff8236"/>
<path d="M21.4 25 Q23 22 25 23.4 Q27.4 22 28.8 25 Q29.6 34 25.4 39.6 Q21 34 21.4 25Z" fill="#e6281a"/><path d="M24 25 Q25 30 24.6 35" stroke="#ff5a3a" stroke-width="1" fill="none"/></g></svg><span class="cl" style="left:489.65px;top:202.35px">img10.jpg</span><div class="cell" style="left:584.55px;top:120.95px"></div><svg class="th" style="left:592.8px;top:135.9px;width:77.5px;height:48.2px" viewBox="0 0 77 48" preserveAspectRatio="none"><defs>
<linearGradient id="a11" x1="0" y1="0" x2="1" y2="0.25"><stop offset="0" stop-color="#9cd973"/><stop offset="0.14" stop-color="#b6e396"/><stop offset="0.5" stop-color="#cdebb6"/><stop offset="1" stop-color="#c4e9ac"/></linearGradient>
<radialGradient id="b11" cx="0.68" cy="0.4" r="0.3"><stop offset="0" stop-color="#f0f8ea"/><stop offset="1" stop-color="#e4f4d8" stop-opacity="0"/></radialGradient>
<linearGradient id="c11" x1="0" y1="0" x2="0" y2="1"><stop offset="0.6" stop-color="#e4f4d8" stop-opacity="0"/><stop offset="1" stop-color="#e2f3d6" stop-opacity="0.9"/></linearGradient>
<filter id="z11"><feGaussianBlur stdDeviation="0.55"/></filter></defs>
<rect width="77" height="48" fill="url(#a11)"/><rect width="77" height="48" fill="url(#b11)"/><rect width="77" height="48" fill="url(#c11)"/>
<g filter="url(#z11)">
<path d="M58 29.4 Q66 23 74 21.6 Q70 27 60 31Z" fill="#f9d4cc"/>
<path d="M57 30 Q68 28.6 77 32 V40 Q66 39.6 58 34Z" fill="#f8a2a6"/>
<path d="M56 32.6 Q44 33 33.4 42.4 Q46 45 57 37Z" fill="#f9a6a4"/>
<path d="M49 33 Q42 34 38 37" stroke="#fbc6c0" stroke-width="1.2" fill="none"/>
<path d="M53 31 Q58 30 60 34 Q59 40 58 45 Q55.6 42 54.4 37Z" fill="#f0524c"/>
<path d="M57.6 43 Q58.6 46 59 48" stroke="#7a8a30" stroke-width="1.3" fill="none"/>
<path d="M53 23.6 Q51.6 14 53.8 6.4" stroke="#e79a8a" stroke-width="1.5" fill="none"/><circle cx="54.4" cy="5.2" r="1.7" fill="#b9483a"/>
<path d="M48.6 22 Q52 25 53.4 29 M56.6 25 Q55.4 27 55 30" stroke="#c84a42" stroke-width="1.6" fill="none"/><path d="M50 26 Q54 24 57 27 Q56 31 53 31Z" fill="#ee6a62"/></g></svg><span class="cl" style="left:585.35px;top:202.35px">img11.jpg</span><div class="cell" style="left:680.25px;top:120.95px"></div><svg class="th" style="left:688.2px;top:135.9px;width:77.7px;height:48.2px" viewBox="0 0 77 48" preserveAspectRatio="none"><defs>
<linearGradient id="a12" x1="0" y1="0" x2="0" y2="1"><stop offset="0" stop-color="#c6da26"/><stop offset="0.22" stop-color="#dfe25a"/><stop offset="0.55" stop-color="#e4e26e"/><stop offset="0.72" stop-color="#b4d83a"/><stop offset="1" stop-color="#68b618"/></linearGradient>
<radialGradient id="b12" cx="0.38" cy="0.42" r="0.36"><stop offset="0" stop-color="#eee884"/><stop offset="1" stop-color="#e8e476" stop-opacity="0"/></radialGradient>
<radialGradient id="c12" cx="1" cy="0.35" r="0.3"><stop offset="0" stop-color="#ecdc98"/><stop offset="1" stop-color="#e8dc90" stop-opacity="0"/></radialGradient>
<linearGradient id="l12" x1="0" y1="0" x2="1" y2="0"><stop offset="0" stop-color="#8ccc34"/><stop offset="0.6" stop-color="#58aa22"/><stop offset="1" stop-color="#3c8c18"/></linearGradient>
<filter id="z12"><feGaussianBlur stdDeviation="0.6"/></filter></defs>
<rect width="77" height="48" fill="url(#a12)"/><rect width="77" height="48" fill="url(#b12)"/><rect width="77" height="48" fill="url(#c12)"/>
<g filter="url(#z12)"><path d="M52.8 3.6 Q45 14 43.6 23.6 Q48 34 56.2 42.8 Q58.6 22 52.8 3.6Z" fill="url(#l12)"/>
<path d="M63 0 H72.4 Q73 18 68.4 30 Q66 36 64 37.8 Q60 30 59.6 24 Q60 10 63 0Z" fill="url(#l12)"/>
<path d="M66 4 Q64.6 20 65 34" stroke="#3f9018" stroke-width="0.9" fill="none"/></g></svg><span class="cl" style="left:681.05px;top:202.35px">img12.jpg</span><div class="cell" style="left:393.15px;top:211.30px"></div><svg class="th" style="left:401.6px;top:226.6px;width:77.0px;height:48.2px" viewBox="0 0 77 48" preserveAspectRatio="none"><defs>
<linearGradient id="a7" x1="0" y1="0" x2="1" y2="0.3"><stop offset="0" stop-color="#10869c"/><stop offset="0.5" stop-color="#1c98ac"/><stop offset="1" stop-color="#2fa4b6"/></linearGradient>
<radialGradient id="b7" cx="0.8" cy="0.66" r="0.36"><stop offset="0" stop-color="#5cbcc8"/><stop offset="1" stop-color="#3aaaba" stop-opacity="0"/></radialGradient>
<radialGradient id="c7" cx="0.1" cy="0.42" r="0.28"><stop offset="0" stop-color="#0a7088"/><stop offset="1" stop-color="#0c7a90" stop-opacity="0"/></radialGradient>
<radialGradient id="d7" cx="0.42" cy="0.7" r="0.25"><stop offset="0" stop-color="#3aa8b8"/><stop offset="1" stop-color="#3aa8b8" stop-opacity="0"/></radialGradient>
<filter id="z7"><feGaussianBlur stdDeviation="0.5"/></filter></defs>
<rect width="77" height="48" fill="url(#a7)"/><rect width="77" height="48" fill="url(#b7)"/><rect width="77" height="48" fill="url(#c7)"/><rect width="77" height="48" fill="url(#d7)"/>
<g filter="url(#z7)"><path d="M47.4 0 H73.4 Q68 4 63 7 Q58 12.4 54 14.4 Q50.6 18 46 18.8 Q37 20.6 27 19 Q29.6 17 32.4 16 Q30 13.6 30.6 11.6 Q33.6 12.8 36.6 13 Q34.8 9 35.6 5.6 Q39.6 9.4 42.6 10 Q44.6 4.4 47.4 0Z" fill="#cc1228"/>
<path d="M35.6 5.6 Q39.6 9.4 42.6 10 Q42.4 13.6 38.4 14 Q35.2 9.6 35.6 5.6Z M27 19 Q31 17.4 36 18 Q33.6 20.4 27 19Z M47.4 0 H56 Q50 5 45.6 9 Q45.6 4.4 47.4 0Z M58 4 Q62 2 66 0 H70 Q64 4.6 59 6.6Z" fill="#7a0c24"/>
<path d="M49.6 13 L52.4 10.4 L55.4 11 L57.4 7.8 L61.2 6 L63.4 3.6 L66 1.6" stroke="#f9b4bc" stroke-width="1.5" fill="none" stroke-dasharray="1.3 1.3"/><path d="M47 16.4 L51 14.6 L54.4 15" stroke="#fcd6da" stroke-width="1.2" fill="none" stroke-dasharray="1.1 1.1"/>
<path d="M37.6 19.6 V28.4" stroke="#c8405e" stroke-width="0.8"/><ellipse cx="37.6" cy="29.8" rx="0.9" ry="1.7" fill="#3c2256"/></g></svg><span class="cl" style="left:393.95px;top:293.30px">img7.jpg</span><div class="cell" style="left:488.85px;top:211.30px"></div><svg class="th" style="left:497px;top:226.6px;width:77.2px;height:48.2px" viewBox="0 0 77 48" preserveAspectRatio="none"><defs>
<linearGradient id="a8" x1="0" y1="0" x2="0" y2="1"><stop offset="0" stop-color="#f4dde9"/><stop offset="0.3" stop-color="#f8e9f1"/><stop offset="0.72" stop-color="#f7e4ee"/><stop offset="0.9" stop-color="#efb4d2"/><stop offset="1" stop-color="#e892be"/></linearGradient>
<radialGradient id="b8" cx="0.25" cy="0.5" r="0.35"><stop offset="0" stop-color="#fdf6fa"/><stop offset="1" stop-color="#fbf0f6" stop-opacity="0"/></radialGradient>
<radialGradient id="c8" cx="0.95" cy="0.85" r="0.4"><stop offset="0" stop-color="#fae8f2"/><stop offset="1" stop-color="#fae8f2" stop-opacity="0"/></radialGradient>
<filter id="z8"><feGaussianBlur stdDeviation="0.55"/></filter></defs>
<rect width="77" height="48" fill="url(#a8)"/><rect width="77" height="48" fill="url(#b8)"/><rect width="77" height="48" fill="url(#c8)"/>
<g filter="url(#z8)"><path d="M57.8 28 Q59.4 38 61.4 48" stroke="#b8788e" stroke-width="1.1" fill="none"/>
<path d="M55 24.6 Q40 26 25 29.6 Q40 22.6 55 22.8Z" fill="#f8c878"/>
<path d="M55 22.6 Q40 20 26.8 10.6 Q42 14 57 20Z" fill="#f6b434"/>
<path d="M55.6 21 Q44 14 38 5.2 Q50 10 58.4 19.6Z" fill="#f7b630"/>
<path d="M56.6 20.6 Q48 10 50.2 0.8 Q58 8 60 20Z" fill="#f5ae28"/>
<path d="M59 20.6 Q60 8 63.6 0.8 Q66 10 62 21.6Z" fill="#f6b22c"/>
<path d="M61.6 21.6 Q65 12 69 5.6 Q69 14 64 23Z" fill="#f9d08a"/>
<ellipse cx="57" cy="24.4" rx="4.2" ry="3.8" fill="#a2327a"/><ellipse cx="55" cy="22" rx="3" ry="1.8" fill="#f08a30"/></g></svg><span class="cl" style="left:489.65px;top:293.30px">img8.jpg</span><div class="cell" style="left:584.55px;top:211.30px"></div><svg class="th" style="left:592.8px;top:239.3px;width:77.5px;height:24.4px" viewBox="0 0 77 24" preserveAspectRatio="none"><defs>
<linearGradient id="a9" x1="0" y1="0" x2="1" y2="0"><stop offset="0" stop-color="#9cdcbc"/><stop offset="0.5" stop-color="#b6e4ce"/><stop offset="0.8" stop-color="#86d2ac"/><stop offset="1" stop-color="#92d8b4"/></linearGradient>
<radialGradient id="b9" cx="0.29" cy="0.5" r="0.2" gradientTransform="translate(0.29 0.5) scale(1 2.2) translate(-0.29 -0.5)"><stop offset="0" stop-color="#ecf2ec"/><stop offset="1" stop-color="#dcefe4" stop-opacity="0"/></radialGradient>
<linearGradient id="c9" x1="0" y1="0" x2="0" y2="1"><stop offset="0.55" stop-color="#d8efe2" stop-opacity="0"/><stop offset="1" stop-color="#d8efe2" stop-opacity="0.95"/></linearGradient>
<filter id="z9"><feGaussianBlur stdDeviation="0.45"/></filter></defs>
<rect width="77" height="24" fill="url(#a9)"/><rect width="77" height="24" fill="url(#b9)"/><rect width="77" height="24" fill="url(#c9)"/>
<g filter="url(#z9)" transform="translate(-2 0)"><path d="M49.4 15.6 Q49 20 48.8 24 M51.4 15.6 Q53 20 54.6 24" stroke="#4a2c3c" stroke-width="0.7" fill="none"/>
<path d="M46 3.4 L48 5.6 L50.6 3 L52 5.4 L55 5 L54 8.6 L56.6 11 L53.6 12.6 L54 16 L50.4 15 L48.6 17.6 L46 15 L42.4 15.4 L43.4 12 L40.6 9.6 L44 8 Z" fill="#e0288e"/><circle cx="48" cy="10" r="2.4" fill="#c41878"/></g></svg><span class="cl" style="left:585.35px;top:293.30px">img9.jpg</span>

<div style="left:776.4px;top:60px;width:3.6px;height:498px;background:#2e2e2e"></div>
<!-- status -->
<div style="left:0;top:546.4px;width:780px;height:11.6px;background:#313131"></div>
<div class="st" style="left:0;top:0;width:780px;height:558px">
<span style="left:2px">Selected: 0 of 8.8 M, files: 0 of 22, folders: 0 of 76</span>
<span style="left:393px">[..]</span>
<span style="right:4px;transform-origin:100% 50%">&lt;DIR&gt;  07.12.2019 12:15:01  dr------</span>
</div>
<div id="cmd"><span class="lb">c:\Windows&gt;</span><div class="in"></div>
<svg style="left:770px;top:7px;width:5.4px;height:3.4px" viewBox="0 0 6 4"><path d="M0.5 0.5 L3 3 L5.5 0.5" fill="none" stroke="#ddd" stroke-width="0.8"/></svg></div>
<div style="left:0;top:0;width:780px;height:1.1px;background:#3c3c3c"></div><div style="left:0;top:0;width:1.1px;height:588px;background:#434343"></div><div style="left:778.9px;top:0;width:1.1px;height:588px;background:#424242"></div><div style="left:0;top:587.1px;width:780px;height:0.9px;background:#484848"></div>
<div id="fkeys">
<span style="left:46px">View F3</span><span style="left:137px">Edit F4</span><span style="left:228.6px">Copy F5</span><span style="left:323.2px">Move F6</span><span style="left:424.8px">Directory F7</span><span style="left:527px">Delete F8</span><span style="left:630px">Terminal F9</span><span style="left:731px">Exit Alt+X</span>
</div>
</div></body></html>
